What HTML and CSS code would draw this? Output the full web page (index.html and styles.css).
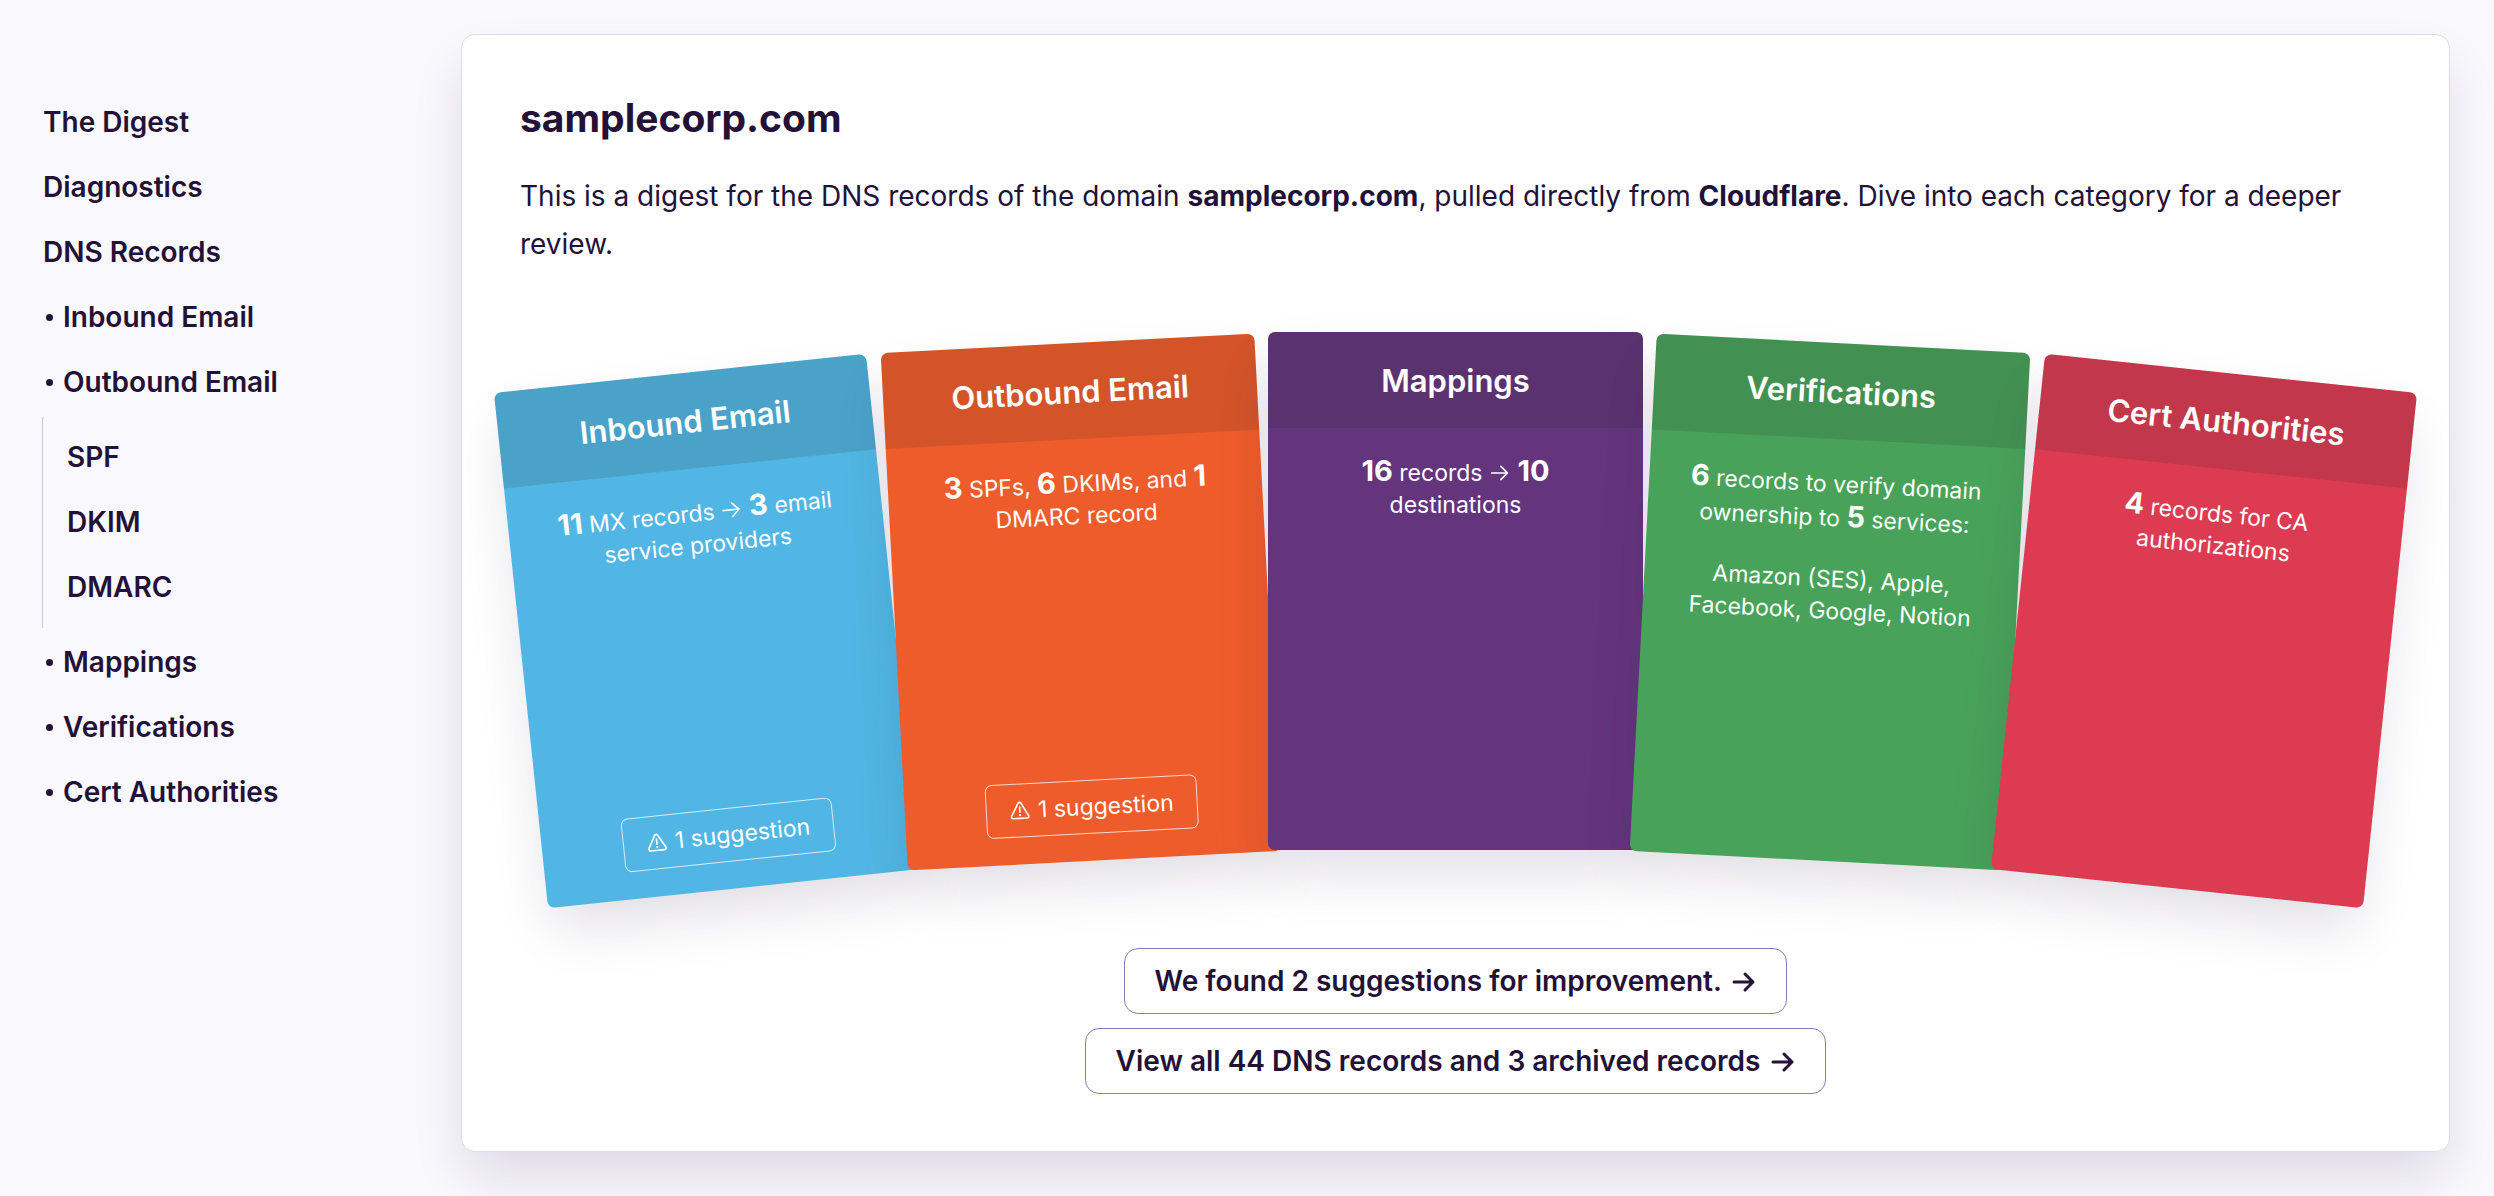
FILE: index.html
```html
<!DOCTYPE html>
<html lang="en">
<head>
<meta charset="utf-8">
<meta name="viewport" content="width=device-width, initial-scale=1">
<title>samplecorp.com – The Digest</title>
<link rel="stylesheet" href="styles.css">
</head>
<body>
<svg class="sprite" aria-hidden="true">
  <symbol id="arrow" viewBox="0 0 24 24"><path d="M2 12H21M13 4L21 12L13 20" fill="none" stroke="currentColor" stroke-width="3" stroke-linecap="round" stroke-linejoin="round"/></symbol>
  <symbol id="arrow-thin" viewBox="0 0 24 24"><path d="M2 12H21M13 4L21 12L13 20" fill="none" stroke="currentColor" stroke-width="2" stroke-linecap="round" stroke-linejoin="round"/></symbol>
  <symbol id="warning" viewBox="0 0 24 24"><path d="M10.3 3.2L1.9 18.4C1.1 19.9 2 21.5 3.7 21.5H20.3C22 21.5 22.9 19.9 22.1 18.4L13.7 3.2C12.9 1.9 11.1 1.9 10.3 3.2Z" fill="none" stroke="currentColor" stroke-width="2"/><path d="M12 8V14" stroke="currentColor" stroke-width="2" stroke-linecap="round"/><circle cx="12" cy="17.5" r="1.3" fill="currentColor"/></symbol>
</svg>
<div class="page">
  <nav class="sidebar" aria-label="Sections">
    <ul class="menu">
      <li><a href="#digest">The Digest</a></li>
      <li><a href="#diagnostics">Diagnostics</a></li>
      <li><a href="#records">DNS Records</a></li>
      <li><a class="dotted" href="#inbound">Inbound Email</a></li>
      <li><a class="dotted" href="#outbound">Outbound Email</a>
        <ul class="submenu">
          <li><a href="#spf">SPF</a></li>
          <li><a href="#dkim">DKIM</a></li>
          <li><a href="#dmarc">DMARC</a></li>
        </ul>
      </li>
      <li><a class="dotted" href="#mappings">Mappings</a></li>
      <li><a class="dotted" href="#verifications">Verifications</a></li>
      <li><a class="dotted" href="#authorities">Cert Authorities</a></li>
    </ul>
  </nav>
  <main class="panel">
    <h1>samplecorp.com</h1>
    <p class="intro">This is a digest for the DNS records of the domain <strong>samplecorp.com</strong>, pulled directly from <strong>Cloudflare</strong>. Dive into each category for a deeper review.</p>
    <div class="fan">
      <section class="card inbound">
        <h2>Inbound Email</h2>
        <div class="card-body">
          <p><b>11</b> MX records <svg class="arrow-small" role="img" aria-label="to"><use href="#arrow-thin"/></svg> <b>3</b> email service providers</p>
          <a class="suggestion" href="#inbound-suggestion"><svg class="warning" aria-hidden="true"><use href="#warning"/></svg>1 suggestion</a>
        </div>
      </section>
      <section class="card outbound">
        <h2>Outbound Email</h2>
        <div class="card-body">
          <p><b>3</b> SPFs, <b>6</b> DKIMs, and <b>1</b> DMARC record</p>
          <a class="suggestion" href="#outbound-suggestion"><svg class="warning" aria-hidden="true"><use href="#warning"/></svg>1 suggestion</a>
        </div>
      </section>
      <section class="card mappings">
        <h2>Mappings</h2>
        <div class="card-body">
          <p><b>16</b> records <svg class="arrow-small" role="img" aria-label="to"><use href="#arrow-thin"/></svg> <b>10</b> destinations</p>
        </div>
      </section>
      <section class="card verifications">
        <h2>Verifications</h2>
        <div class="card-body">
          <p><b>6</b> records to verify domain ownership to <b>5</b> services:</p>
          <p>Amazon (SES), Apple, Facebook, Google, Notion</p>
        </div>
      </section>
      <section class="card authorities">
        <h2>Cert Authorities</h2>
        <div class="card-body">
          <p><b>4</b> records for CA authorizations</p>
        </div>
      </section>
    </div>
    <div class="actions">
      <a class="action" href="#suggestions">We found 2 suggestions for improvement. <svg class="arrow-icon" aria-hidden="true"><use href="#arrow"/></svg></a>
      <a class="action" href="#all-records">View all 44 DNS records and 3 archived records <svg class="arrow-icon" aria-hidden="true"><use href="#arrow"/></svg></a>
    </div>
  </main>
</div>
</body>
</html>
```
FILE: styles.css
```css
* {
  box-sizing: border-box;
}

body {
  margin: 0;
  background: #f9f8fd;
  color: #231138;
  font-family: Inter, "Liberation Sans", sans-serif;
  font-size: 28px;
  line-height: 48px;
}

a {
  color: inherit;
  text-decoration: none;
}

.sprite {
  position: absolute;
  width: 0;
  height: 0;
}

.page {
  display: grid;
  grid-template-columns: 374px minmax(0, 1fr);
  gap: 44px;
  align-items: start;
  padding: 34px 44px 44px 43px;
}

/* Sidebar */
.sidebar {
  padding-top: 56px;
  font-weight: 600;
}

.menu,
.submenu {
  margin: 0;
  padding: 0;
  list-style: none;
}

.menu a {
  display: flex;
  align-items: center;
  line-height: 65px;
}

.dotted {
  gap: 10px;
  padding-left: 3px;
}

.dotted::before {
  content: "";
  width: 7px;
  height: 7px;
  border-radius: 50%;
  background: currentColor;
}

.menu .submenu {
  margin: 2px 0 2px -1px;
  padding: 8px 0 8px 24px;
  border-left: 1px solid #cac7d0;
}

/* Panel */
.panel {
  padding: 55px 58px 57px;
  background: #fff;
  border: 1px solid #dfdaec;
  border-radius: 14px;
  box-shadow: 0 28px 56px -7px rgba(35, 17, 56, 0.14);
}

h1 {
  margin: 0;
  font-size: 39px;
  font-weight: 700;
  line-height: 56px;
}

.intro {
  margin: 26px 0 0;
}

.intro strong {
  font-weight: 700;
}

/* Fan of cards */
.fan {
  display: grid;
  grid-template-columns: repeat(5, minmax(0, 1fr));
  margin-top: 64px;
}

/* Each card stacks above the one to its left */
.card {
  display: flex;
  flex-direction: column;
  isolation: isolate;
  min-height: 518px;
  border-radius: 7px;
  color: #fff;
  text-align: center;
  box-shadow: 0 28px 56px -7px rgba(35, 17, 56, 0.14);
}

.inbound {
  background: #51b6e3;
  transform: translateY(40px) rotate(-6deg);
}

.outbound {
  background: #ee5c2b;
  transform: translateY(11px) rotate(-3deg);
}

.mappings {
  background: #64357d;
}

.verifications {
  background: #49a25a;
  transform: translateY(11px) rotate(3deg);
}

.authorities {
  background: #dc3b52;
  transform: translateY(40px) rotate(6deg);
}

.card h2 {
  margin: 0;
  padding: 25px 14px 23px;
  border-radius: 7px 7px 0 0;
  background: rgba(34, 34, 34, 0.13);
  font-size: 31px;
  font-weight: 600;
  line-height: 48px;
}

.card-body {
  display: flex;
  flex: 1;
  flex-direction: column;
  align-items: center;
  gap: 29px;
  padding: 27px 36px;
  font-size: 23px;
  line-height: 32px;
}

.card-body p {
  margin: 0;
}

.card-body b {
  font-size: 29px;
  font-weight: 700;
}

.arrow-small {
  width: 20px;
  height: 20px;
  margin: 0 1px;
  vertical-align: -2px;
}

.suggestion {
  display: flex;
  align-items: center;
  gap: 8px;
  margin-top: auto;
  padding: 10px 23px;
  border: 1px solid rgba(255, 255, 255, 0.75);
  border-radius: 7px;
}

.warning {
  width: 20px;
  height: 20px;
}

/* Bottom links */
.actions {
  display: flex;
  flex-direction: column;
  align-items: center;
  gap: 14px;
  margin-top: 98px;
}

.action {
  padding: 8px 30px;
  border: 1px solid #8f7ba8;
  border-radius: 14px;
  font-weight: 600;
}

.arrow-icon {
  width: 24px;
  height: 24px;
  margin-left: 4px;
  vertical-align: -3px;
}
```
